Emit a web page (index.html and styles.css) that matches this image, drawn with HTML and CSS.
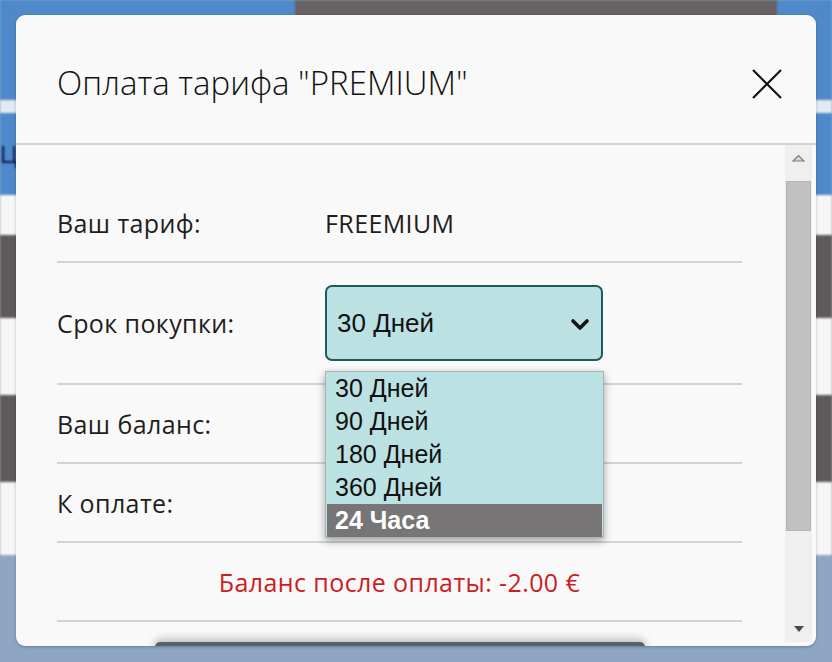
FILE: index.html
```html
<!DOCTYPE html>
<html lang="ru">
<head>
<meta charset="utf-8">
<title>Оплата тарифа</title>
<link rel="stylesheet" href="styles.css">
</head>
<body>
<div class="backdrop">
  <div class="band band-top">
    <div class="top-blue top-left"></div>
    <div class="top-gray"></div>
    <div class="top-blue top-right"></div>
  </div>
  <div class="band band-light"></div>
  <div class="band band-blue"><span class="bg-letter">Ц</span></div>
  <div class="band band-white b1"></div>
  <div class="band band-gray b2"></div>
  <div class="band band-white b3"></div>
  <div class="band band-gray b4"></div>
  <div class="band band-white b5"></div>
  <div class="band band-bottom"></div>
</div>

<div class="modal">
  <div class="modal-header">
    <h2 class="modal-title">Оплата тарифа "PREMIUM"</h2>
    <button class="close-btn" aria-label="Закрыть">
      <svg width="32" height="30" viewBox="0 0 32 30"><path d="M2 1 L30 29 M30 1 L2 29" stroke="#111" stroke-width="2.2" fill="none"/></svg>
    </button>
  </div>
  <div class="modal-body">
    <div class="content">
      <div class="row row-first">
        <div class="label">Ваш тариф:</div>
        <div class="value">FREEMIUM</div>
      </div>
      <div class="row row-select">
        <div class="label">Срок покупки:</div>
        <div class="select-wrap">
          <div class="select">
            <span>30 Дней</span>
            <svg class="chevron" width="20" height="13" viewBox="0 0 20 13"><path d="M3 3 L10 10 L17 3" stroke="#111" stroke-width="3.6" fill="none" stroke-linecap="round" stroke-linejoin="round"/></svg>
          </div>
          <ul class="options">
            <li>30 Дней</li>
            <li>90 Дней</li>
            <li>180 Дней</li>
            <li>360 Дней</li>
            <li class="active">24 Часа</li>
          </ul>
        </div>
      </div>
      <div class="row">
        <div class="label">Ваш баланс:</div>
        <div class="value"></div>
      </div>
      <div class="row">
        <div class="label">К оплате:</div>
        <div class="value"></div>
      </div>
      <div class="row row-center">
        <div class="warn">Баланс после оплаты: -2.00 €</div>
      </div>
      <div class="pay-btn"></div>
    </div>
    <div class="scrollbar">
      <div class="sb-btn">
        <svg width="13" height="8" viewBox="0 0 13 8"><path d="M1 7 L6.5 1.5 L12 7 Z" fill="#d6d6d6" stroke="#7a7a7a" stroke-width="1.2"/></svg>
      </div>
      <div class="sb-thumb"></div>
      <div class="sb-space"></div>
      <div class="sb-btn">
        <svg width="12" height="8" viewBox="0 0 12 8"><path d="M1 1 L11 1 L6 7 Z" fill="#4a4a4a"/></svg>
      </div>
    </div>
  </div>
</div>
</body>
</html>
```
FILE: styles.css
```css
* { box-sizing: border-box; }
html, body { margin: 0; padding: 0; }
body {
  width: 832px;
  height: 662px;
  overflow: hidden;
  position: relative;
  font-family: "Open Sans", "Noto Sans", sans-serif;
  background: #8fa6c3;
}

.backdrop {
  display: flex;
  flex-direction: column;
  height: 662px;
  filter: blur(1.2px);
}
.band { width: 100%; flex: none; }
.band-top { height: 100px; display: flex; }
.top-blue { background: #4f89ca; }
.top-left { width: 295px; }
.top-gray { width: 482px; background: #676263; }
.top-right { flex: 1; }
.band-light { height: 13px; background: #e4eaf1; }
.band-blue { height: 82px; background: #4f89ca; }
.bg-letter {
  display: block;
  margin-left: 0;
  padding-top: 30px;
  font-family: "Liberation Sans", sans-serif;
  font-size: 24px;
  color: #0f1d4a;
  line-height: 1;
}
.band-white { background: #f6f6f6; }
.band-gray { background: #5e5a5b; }
.b1 { height: 40px; }
.b2 { height: 83px; }
.b3 { height: 77px; }
.b4 { height: 87px; }
.b5 { height: 73px; }
.band-bottom { flex: 1; background: #8fa6c3; }

.modal {
  position: absolute;
  left: 16px;
  top: 15px;
  width: 800px;
  height: 631px;
  background: #f9f9f9;
  border-radius: 9px;
  overflow: hidden;
  display: flex;
  flex-direction: column;
  box-shadow: 0 1px 3px rgba(0,0,0,0.25);
}

.modal-header {
  height: 130px;
  flex: none;
  display: flex;
  align-items: center;
  justify-content: space-between;
  padding: 6px 33px 0 41px;
  border-bottom: 2px solid #d3d3d3;
}
.modal-title {
  margin: 0;
  font-weight: 300;
  font-size: 33px;
  color: #111;
  letter-spacing: 0;
}
.close-btn {
  border: 0;
  background: transparent;
  padding: 0;
  width: 32px;
  height: 30px;
  display: flex;
  margin-top: 4px;
}

.modal-body {
  flex: 1;
  display: flex;
  overflow: hidden;
  min-height: 0;
}
.content {
  flex: 1;
  padding: 39px 43px 0 41px;
  display: flex;
  flex-direction: column;
  min-width: 0;
}

.row {
  display: grid;
  grid-template-columns: 268px 1fr;
  align-items: center;
  min-height: 79px;
  border-bottom: 2px solid #d3d3d3;
  flex: none;
}
.row-select { min-height: 122px; }
.row-center { display: flex; justify-content: center; }

.label, .value, .warn {
  font-size: 25px;
  letter-spacing: 0.4px;
  color: #1e1e1e;
}
.warn { color: #cf1b22; }

.select-wrap {
  position: relative;
  width: 278px;
}
.select {
  height: 76px;
  border: 2px solid #1d5b5c;
  border-radius: 7px;
  background: #bce1e3;
  display: flex;
  align-items: center;
  justify-content: space-between;
  padding: 0 11px 0 10px;
  font-family: "Liberation Sans", Arial, sans-serif;
  font-size: 26px;
  color: #111;
}
.chevron { margin-top: 2px; }

.options {
  position: absolute;
  left: 0;
  top: 86px;
  width: 279px;
  margin: 0;
  padding: 0 1px;
  list-style: none;
  background: #bce1e3;
  border: 1px solid #a7b4b5;
  box-shadow: 0 3px 8px rgba(0,0,0,0.35);
  font-family: "Liberation Sans", Arial, sans-serif;
  font-size: 25px;
  color: #111;
  z-index: 2;
}
.options li {
  height: 33px;
  line-height: 33px;
  padding-left: 8px;
}
.options li.active {
  background: #777575;
  color: #fff;
  font-weight: bold;
}

.pay-btn {
  flex: none;
  align-self: center;
  width: 490px;
  height: 40px;
  margin-top: 20px;
  background: #5a6068;
  border-radius: 5px;
  box-shadow: 0 -3px 8px rgba(0,0,0,0.25);
}

.scrollbar {
  width: 27px;
  margin-right: 4px;
  margin-bottom: 4px;
  background: #efefef;
  display: flex;
  flex-direction: column;
  flex: none;
}
.sb-btn {
  height: 26px;
  display: flex;
  align-items: center;
  justify-content: center;
  flex: none;
}
.sb-thumb {
  margin: 10px 1px 0 1px;
  height: 350px;
  background: #c1c1c1;
  border: 1px solid #b3b3b3;
  flex: none;
}
.sb-space { flex: 1; }
```
